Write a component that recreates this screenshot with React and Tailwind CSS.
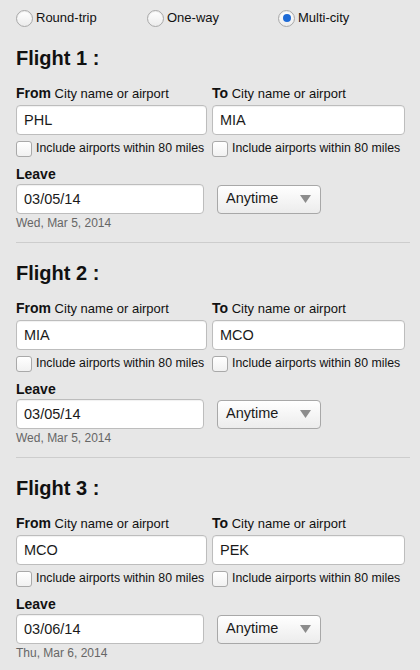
const flights = [
  { n: 1, from: "PHL", to: "MIA", date: "03/05/14", day: "Wed, Mar 5, 2014" },
  { n: 2, from: "MIA", to: "MCO", date: "03/05/14", day: "Wed, Mar 5, 2014" },
  { n: 3, from: "MCO", to: "PEK", date: "03/06/14", day: "Thu, Mar 6, 2014" },
];

const Radio = ({ label, checked }) => (
  <label className="flex items-center w-[131px] h-[36px]">
    <span className="w-[17px] h-[17px] rounded-full border border-[#a9a9a9] bg-gradient-to-b from-white to-[#ececec] shadow-[inset_0_1px_1px_rgba(0,0,0,0.08)] flex items-center justify-center">
      {checked && <span className="w-[8px] h-[8px] rounded-full bg-[#1d6ad6]" />}
    </span>
    <span className="ml-[3px] text-[13px] text-[#111]">{label}</span>
  </label>
);

const Checkbox = () => (
  <label className="flex items-center h-[15px]">
    <span className="w-[16px] h-[16px] rounded-[3px] border border-[#a9a9a9] bg-gradient-to-b from-white to-[#f1f1f1] shrink-0" />
    <span className="ml-[4px] text-[12.3px] leading-[15px] text-[#111] whitespace-nowrap">Include airports within 80 miles</span>
  </label>
);

const TextBox = ({ value, className = "" }) => (
  <input
    readOnly
    value={value}
    className={`h-[30px] rounded-[4px] border border-[#bdbdbd] bg-white px-[7px] text-[14.5px] text-[#1a1a1a] shadow-[inset_0_1px_1px_rgba(0,0,0,0.06)] outline-none ${className}`}
  />
);

const Field = ({ title, value }) => (
  <div className="flex flex-col">
    <div className="h-[16px] leading-[16px] text-[#111] whitespace-nowrap">
      <span className="text-[14px] font-bold">{title}</span>
      <span className="text-[13px]"> City name or airport</span>
    </div>
    <TextBox value={value} className="mt-[4px] w-full" />
  </div>
);

const Flight = ({ f, last }) => (
  <section className="pt-[10px]">
    <h2 className="text-[20px] leading-[24px] font-bold text-[#111]">Flight {f.n} :</h2>
    <div className="mt-[15px] grid grid-cols-[191px_193px] gap-x-[5px]">
      <Field title="From" value={f.from} />
      <Field title="To" value={f.to} />
      <div className="mt-[6px]"><Checkbox /></div>
      <div className="mt-[6px]"><Checkbox /></div>
    </div>
    <div className="mt-[10px] h-[16px] leading-[16px] text-[14px] font-bold text-[#111]">Leave</div>
    <div className="mt-[2px] flex items-center">
      <TextBox value={f.date} className="w-[188px]" />
      <div className="ml-[13px] w-[104px] h-[29px] rounded-[4px] border border-[#a8a8a8] bg-gradient-to-b from-white to-[#ececec] flex items-center justify-between pl-[8px] pr-[9px]">
        <span className="text-[14.5px] text-[#1a1a1a]">Anytime</span>
        <svg width="11" height="8" viewBox="0 0 11 8"><path d="M0 0h11L5.5 8z" fill="#8c8c8c" /></svg>
      </div>
    </div>
    <div className="mt-[2px] h-[14px] leading-[14px] text-[12px] text-[#666]">{f.day}</div>
    {!last && <div className="mt-[12px] h-px bg-[#cdcdcd] mb-[8px]" />}
  </section>
);

export default function App() {
  return (
    <div className="min-h-[670px] w-[420px] bg-[#e7e7e7] pl-[16px] pr-[10px] font-['Liberation_Sans',Arial,sans-serif]">
      <div className="flex">
        <Radio label="Round-trip" />
        <Radio label="One-way" />
        <Radio label="Multi-city" checked />
      </div>
      {flights.map((f, i) => (
        <Flight key={f.n} f={f} last={i === flights.length - 1} />
      ))}
    </div>
  );
}
